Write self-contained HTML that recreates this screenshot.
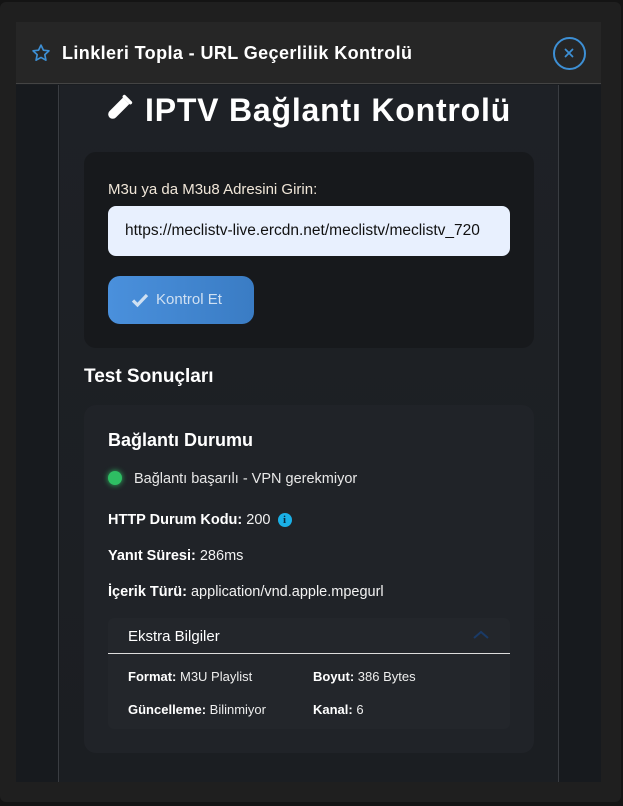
<!DOCTYPE html>
<html><head><meta charset="utf-8"><style>
*{box-sizing:border-box;margin:0;padding:0}
body{width:623px;height:806px;background:#141414;font-family:"Liberation Sans","DejaVu Sans",sans-serif;color:#fff;position:relative;overflow:hidden}
.frame{position:absolute;left:0;top:2px;width:621px;height:800px;background:#1f1f1f;border-radius:6px}
.modal{position:absolute;left:16px;top:22px;width:585px;height:760px;background:#1a1d21}
.hdr{height:62px;background:#262626;border-bottom:1px solid #444;position:relative}
.hdr .t{position:absolute;left:46px;top:21px;font-size:18px;font-weight:bold;color:#fff;letter-spacing:0.4px;white-space:nowrap}
.star{position:absolute;left:15px;top:21px}
.close{position:absolute;left:537px;top:15px;width:33px;height:33px;border:2.5px solid #3d8fd4;border-radius:50%}
.lcol{position:absolute;left:0;top:63px;width:43px;height:697px;background:#171a1e;border-right:1px solid #3a3d42}
.rcol{position:absolute;left:542px;top:63px;width:43px;height:697px;background:#171a1e;border-left:1px solid #3a3d42}
.main{position:absolute;left:44px;top:63px;width:498px;height:697px;background:linear-gradient(#1e2126,#1b1e22)}
h1{position:absolute;left:43px;top:7px;font-size:32px;font-weight:bold;white-space:nowrap;letter-spacing:0.8px}
.card1{position:absolute;left:24px;top:67px;width:450px;height:196px;background:#17191c;border-radius:12px}
.lbl{position:absolute;left:24px;top:29px;font-size:15px;color:#f0e6d8}
.inp{position:absolute;left:24px;top:54px;width:402px;height:50px;background:#e8f0fe;border-radius:8px;color:#111;font-size:15.5px;padding:16px 0 0 17px;white-space:nowrap;overflow:hidden}
.btn{position:absolute;left:24px;top:124px;width:146px;height:48px;border-radius:12px;background:linear-gradient(90deg,#4a90dc,#3a7cc4);color:#cfe0f2;font-size:15px;padding:15px 0 0 48px}
.ts{position:absolute;left:24px;top:281px;font-size:19px;font-weight:bold}
.card2{position:absolute;left:24px;top:320px;width:450px;height:348px;background:#202328;border-radius:12px}
.bd{position:absolute;left:24px;top:25px;font-size:18px;font-weight:bold}
.dot{position:absolute;left:24px;top:66px;width:14px;height:14px;border-radius:50%;background:#2ebe63;box-shadow:0 0 6px #2ebe63}
.row{position:absolute;left:24px;font-size:14.5px;color:#f2f2f2;white-space:nowrap}
.row b{color:#fff}
.info{display:inline-block;width:14px;height:14px;border-radius:50%;background:#1ab0e6;color:#0a2a40;font-size:11px;font-weight:bold;text-align:center;line-height:14px;vertical-align:1px;margin-left:3px;font-family:"Liberation Serif",serif}
.ex{position:absolute;left:24px;top:213px;width:402px;height:111px;background:#23262b;border-radius:6px}
.exh{height:36px;border-bottom:1.5px solid #ddd;font-size:15px;padding:10px 0 0 20px;position:relative}
.sm{position:absolute;font-size:13px;color:#eee;white-space:nowrap}
.sm b{color:#fff}
</style></head><body>
<div class="frame"></div>
<div class="modal">
 <div class="hdr">
  <svg class="star" width="20" height="20" viewBox="0 0 24 24"><path d="M12 2.5l2.9 6.1 6.6.8-4.9 4.6 1.3 6.6L12 17.3l-5.9 3.3 1.3-6.6-4.9-4.6 6.6-.8z" fill="none" stroke="#3d8fd4" stroke-width="2" stroke-linejoin="round"/></svg>
  <div class="t">Linkleri Topla - URL Geçerlilik Kontrolü</div>
  <div class="close"><svg width="28" height="28" viewBox="0 0 28 28" style="position:absolute;left:0;top:0"><path d="M10.5 10.5l7 7M17.5 10.5l-7 7" stroke="#3d8fd4" stroke-width="1.8" stroke-linecap="round"/></svg></div>
 </div>
 <div class="lcol"></div><div class="rcol"></div>
 <div class="main">
  <h1><svg width="30" height="30" viewBox="0 0 30 30" style="vertical-align:-3px;margin-right:12px"><g transform="rotate(45 15 15)"><rect x="9" y="0" width="12" height="3.5" rx="1.7" fill="#fff"/><path d="M10.5 3.5h9v19a4.5 4.5 0 0 1-9 0z" fill="#fff"/></g></svg>IPTV Bağlantı Kontrolü</h1>
  <div class="card1">
   <div class="lbl">M3u ya da M3u8 Adresini Girin:</div>
   <div class="inp">https://meclistv-live.ercdn.net/meclistv/meclistv_720</div>
   <div class="btn"><svg width="18" height="16" viewBox="0 0 18 16" style="position:absolute;left:23px;top:16px"><path d="M2 8.5l4.5 4.5L16 3" fill="none" stroke="#cfe0f2" stroke-width="3.2"/></svg>Kontrol Et</div>
  </div>
  <div class="ts">Test Sonuçları</div>
  <div class="card2">
   <div class="bd">Bağlantı Durumu</div>
   <div class="dot"></div>
   <div class="row" style="left:50px;top:66px;color:#e8e8e8">Bağlantı başarılı - VPN gerekmiyor</div>
   <div class="row" style="top:107px"><b>HTTP Durum Kodu:</b> 200 <span class="info">i</span></div>
   <div class="row" style="top:143px"><b>Yanıt Süresi:</b> 286ms</div>
   <div class="row" style="top:179px"><b>İçerik Türü:</b> application/vnd.apple.mpegurl</div>
   <div class="ex">
    <div class="exh">Ekstra Bilgiler<svg width="18" height="10" viewBox="0 0 18 10" style="position:absolute;left:364px;top:12px"><path d="M2 8l7-6 7 6" fill="none" stroke="#1a3a66" stroke-width="2"/></svg></div>
    <div class="sm" style="left:20px;top:51px"><b>Format:</b> M3U Playlist</div>
    <div class="sm" style="left:205px;top:51px"><b>Boyut:</b> 386 Bytes</div>
    <div class="sm" style="left:20px;top:84px"><b>Güncelleme:</b> Bilinmiyor</div>
    <div class="sm" style="left:205px;top:84px"><b>Kanal:</b> 6</div>
   </div>
  </div>
 </div>
</div>
</body></html>
